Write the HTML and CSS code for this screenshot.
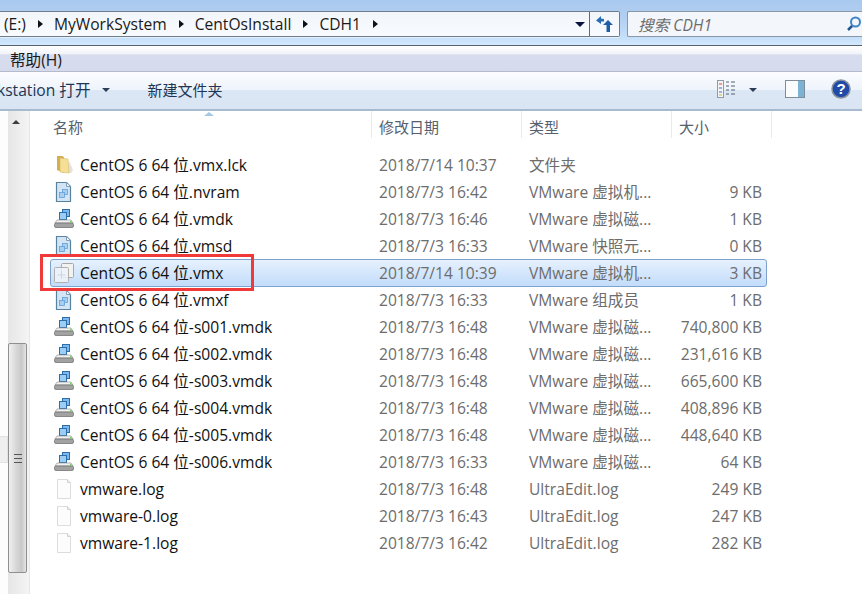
FILE: index.html
```html
<!DOCTYPE html>
<html lang="zh-CN">
<head>
    <meta charset="UTF-8">
    <title>CDH1</title>
    <link rel="stylesheet" href="styles.css">
</head>
<body>

<svg class="defs" width="0" height="0">
    <symbol id="ico-folder" viewBox="0 0 20 20">
        <path d="M15 6l4 9-2 3h-3z" fill="#e2e2e0"/>
        <path d="M3 1h5l2 1v16l-7-3z" fill="#d2ae4e"/>
        <path d="M6 3l8 1 1 14-9-1z" fill="#f5df95" stroke="#d8bb68" stroke-width=".6"/>
    </symbol>
    <symbol id="ico-doc" viewBox="0 0 20 20">
        <path d="M2.500 .5h10l4 4v15h-14z" fill="#d3e5f4" stroke="#58839f" stroke-width="1.200"/>
        <path d="M12.500 .5v4h4z" fill="#f4f8fb" stroke="#7f9db8"/>
        <rect x="8.500" y="7.500" width="5" height="5" fill="#a9cff0" stroke="#62a0da" stroke-width=".8"/>
        <rect x="5.500" y="10.500" width="5" height="5" fill="#a9cff0" stroke="#62a0da" stroke-width=".8"/>
    </symbol>
    <symbol id="ico-disk" viewBox="0 0 20 20">
        <rect x="8.500" y=".5" width="7" height="7" fill="#7ab8ef" stroke="#2b6ea8"/>
        <rect x="5.500" y="3.500" width="7" height="7" fill="#9ccdf5" stroke="#2b6ea8"/>
        <path d="M3 11h14l2 3H1z" fill="#f2f2f2" stroke="#9a9a9a" stroke-width=".7"/>
        <rect x=".5" y="14" width="19" height="4.500" rx="1.500" fill="#a2a2a2" stroke="#6a6a6a" stroke-width=".7"/>
        <rect x="16" y="12" width="1.500" height="1.500" fill="#66d44a"/>
    </symbol>
    <symbol id="ico-vmx" viewBox="0 0 20 20">
        <rect x="7.500" y=".5" width="12" height="14" rx="1" fill="#f2f2f0" stroke="#a8a8a8"/>
        <rect x=".5" y="4.500" width="14" height="15" rx="1" fill="#eef3fa" fill-opacity=".85" stroke="#b0b0b0"/>
        <path d="M7.500 8v8M3.500 12h8" stroke="#ccd5e0"/>
    </symbol>
    <symbol id="ico-log" viewBox="0 0 20 20">
        <path d="M3.500 .5h10l3 3v16h-13z" fill="#fcfcfc" stroke="#dcdcdc"/>
        <path d="M13.500 .5v3h3" fill="#f0f0f0" stroke="#d0d0d0"/>
    </symbol>
</svg>

<div class="window">
    <div class="nav-band">
        <div class="address">
            <div class="crumbs">
                <span>(E:)</span><i class="tri"></i>
                <span>MyWorkSystem</span><i class="tri"></i>
                <span>CentOsInstall</span><i class="tri"></i>
                <span>CDH1</span><i class="tri"></i>
            </div>
            <i class="tri-down"></i>
            <div class="refresh">
                <svg width="18" height="16" viewBox="0 0 18 16">
                    <path d="M5 0L0 4.500 5 8V5.500h3V3L5 2.500z" fill="#2a6db5"/>
                    <path d="M12 4l5 5h-3v7h-3.500V9H7z" fill="#1f5fa8"/>
                </svg>
            </div>
        </div>
        <div class="search">
            <span>搜索 CDH1</span>
            <svg width="16" height="18" viewBox="0 0 16 18">
                <circle cx="9.500" cy="7" r="4.500" fill="none" stroke="#3f85c6" stroke-width="2"/>
                <path d="M6 11l-4 4" stroke="#25558f" stroke-width="2.500"/>
            </svg>
        </div>
    </div>

    <div class="menubar"><span>帮助(H)</span></div>

    <div class="toolbar">
        <span class="open-btn">kstation 打开</span>
        <i class="tri-down small"></i>
        <span class="new-btn">新建文件夹</span>
        <div class="tool-right">
            <svg class="view-ico" width="20" height="18" viewBox="0 0 20 18">
                <rect x=".5" y=".5" width="6" height="17" fill="#f4f4f4" stroke="#8f9aa6"/>
                <path d="M2 4h3" stroke="#d84040"/>
                <path d="M2 8h3" stroke="#4070d0"/>
                <path d="M2 12h3" stroke="#4070d0"/>
                <path d="M2 15h3" stroke="#b8c030"/>
                <path d="M9 2h3m2 0h4M9 6h3m2 0h4M9 10h3m2 0h4M9 14h3m2 0h4" stroke="#55606c"/>
            </svg>
            <i class="tri-down small"></i>
            <svg class="pane-ico" width="20" height="18" viewBox="0 0 20 18">
                <rect x=".5" y=".5" width="19" height="17" fill="#fafbfc" stroke="#7f8c99"/>
                <rect x="13" y="1" width="6" height="16" fill="#7cb2d2"/>
            </svg>
            <svg class="help-ico" width="20" height="20" viewBox="0 0 20 20">
                <circle cx="10" cy="10" r="9" fill="#1f4aa8" stroke="#8a929e" stroke-width="1.500"/>
                <text x="10" y="15" text-anchor="middle" class="help-mark">?</text>
            </svg>
        </div>
    </div>

    <div class="main">
        <aside class="side">
            <div class="side-strip"><div class="side-sel"></div></div>
            <div class="scrollbar">
                <i class="tri-up"></i>
                <div class="thumb"><span class="grip"></span></div>
            </div>
        </aside>

        <section class="files">
            <div class="head">
                <i class="sort-mark"></i>
                <div class="hcell name">名称</div>
                <div class="hcell date">修改日期</div>
                <div class="hcell type">类型</div>
                <div class="hcell size">大小</div>
            </div>

            <div class="rows">
                <div class="row"><svg class="ico"><use href="#ico-folder"/></svg><span class="fname">CentOS 6 64 位.vmx.lck</span><span>2018/7/14 10:37</span><span>文件夹</span><span class="num"></span></div>
                <div class="row"><svg class="ico"><use href="#ico-doc"/></svg><span class="fname">CentOS 6 64 位.nvram</span><span>2018/7/3 16:42</span><span>VMware 虚拟机...</span><span class="num">9 KB</span></div>
                <div class="row"><svg class="ico"><use href="#ico-disk"/></svg><span class="fname">CentOS 6 64 位.vmdk</span><span>2018/7/3 16:46</span><span>VMware 虚拟磁...</span><span class="num">1 KB</span></div>
                <div class="row"><svg class="ico"><use href="#ico-doc"/></svg><span class="fname">CentOS 6 64 位.vmsd</span><span>2018/7/3 16:33</span><span>VMware 快照元...</span><span class="num">0 KB</span></div>
                <div class="row selected"><svg class="ico"><use href="#ico-vmx"/></svg><span class="fname">CentOS 6 64 位.vmx</span><span>2018/7/14 10:39</span><span>VMware 虚拟机...</span><span class="num">3 KB</span></div>
                <div class="row"><svg class="ico"><use href="#ico-doc"/></svg><span class="fname">CentOS 6 64 位.vmxf</span><span>2018/7/3 16:33</span><span>VMware 组成员</span><span class="num">1 KB</span></div>
                <div class="row"><svg class="ico"><use href="#ico-disk"/></svg><span class="fname">CentOS 6 64 位-s001.vmdk</span><span>2018/7/3 16:48</span><span>VMware 虚拟磁...</span><span class="num">740,800 KB</span></div>
                <div class="row"><svg class="ico"><use href="#ico-disk"/></svg><span class="fname">CentOS 6 64 位-s002.vmdk</span><span>2018/7/3 16:48</span><span>VMware 虚拟磁...</span><span class="num">231,616 KB</span></div>
                <div class="row"><svg class="ico"><use href="#ico-disk"/></svg><span class="fname">CentOS 6 64 位-s003.vmdk</span><span>2018/7/3 16:48</span><span>VMware 虚拟磁...</span><span class="num">665,600 KB</span></div>
                <div class="row"><svg class="ico"><use href="#ico-disk"/></svg><span class="fname">CentOS 6 64 位-s004.vmdk</span><span>2018/7/3 16:48</span><span>VMware 虚拟磁...</span><span class="num">408,896 KB</span></div>
                <div class="row"><svg class="ico"><use href="#ico-disk"/></svg><span class="fname">CentOS 6 64 位-s005.vmdk</span><span>2018/7/3 16:48</span><span>VMware 虚拟磁...</span><span class="num">448,640 KB</span></div>
                <div class="row"><svg class="ico"><use href="#ico-disk"/></svg><span class="fname">CentOS 6 64 位-s006.vmdk</span><span>2018/7/3 16:33</span><span>VMware 虚拟磁...</span><span class="num">64 KB</span></div>
                <div class="row"><svg class="ico"><use href="#ico-log"/></svg><span class="fname">vmware.log</span><span>2018/7/3 16:48</span><span>UltraEdit.log</span><span class="num">249 KB</span></div>
                <div class="row"><svg class="ico"><use href="#ico-log"/></svg><span class="fname">vmware-0.log</span><span>2018/7/3 16:43</span><span>UltraEdit.log</span><span class="num">247 KB</span></div>
                <div class="row"><svg class="ico"><use href="#ico-log"/></svg><span class="fname">vmware-1.log</span><span>2018/7/3 16:42</span><span>UltraEdit.log</span><span class="num">282 KB</span></div>
            </div>

            <div class="red-box"></div>
        </section>
    </div>
</div>

</body>
</html>
```

FILE: styles.css
```css
* {
    box-sizing: border-box;
}

html, body {
    margin: 0;
    height: 100%;
    overflow: hidden;
}

body {
    font-family: "Open Sans", "Noto Sans CJK SC", sans-serif;
    font-size: 15.6px;
    color: #1a1a1a;
    background: #fff;
}

.defs {
    position: absolute;
}

.window {
    display: flex;
    flex-direction: column;
    width: 862px;
    height: 594px;
}

/* top glass band with address and search */
.nav-band {
    display: flex;
    gap: 7px;
    height: 46px;
    padding: 11px 0 8px;
    background: linear-gradient(#a9c9ee, #b2cff2 40%, #c6e0fa 85%, #d2e8fc);
    border-bottom: 1px solid #5a6470;
}

.address {
    display: flex;
    align-items: center;
    width: 620px;
    background: linear-gradient(#f2f6fb, #f8fbfe);
    border: 1px solid #6f7c8c;
    border-left: none;
    border-radius: 0 2px 2px 0;
    box-shadow: 0 1px 0 #e6f0fb;
}

.crumbs {
    display: flex;
    align-items: center;
    flex: 1;
    padding-left: 4px;
}

.crumbs span {
    position: relative;
    top: 0;
}

.tri {
    width: 0;
    height: 0;
    margin: 0 11px 0 12px;
    border-left: 5px solid #111;
    border-top: 4px solid transparent;
    border-bottom: 4px solid transparent;
}

.tri-down {
    width: 0;
    height: 0;
    margin-right: 4px;
    border-top: 5px solid #0a1240;
    border-left: 5px solid transparent;
    border-right: 5px solid transparent;
}

.tri-down.small {
    border-top-color: #2c3d58;
    border-top-width: 4px;
    border-left-width: 4px;
    border-right-width: 4px;
}

.refresh {
    display: flex;
    align-items: center;
    justify-content: center;
    width: 30px;
    height: 100%;
    border-left: 1px solid #5f6b78;
}

.search {
    display: flex;
    align-items: center;
    justify-content: space-between;
    flex: 1;
    padding: 0 0 0 10px;
    background: #f3f7fc;
    border: 1px solid #8b97a5;
    border-right: none;
    border-radius: 2px 0 0 2px;
    font-style: italic;
    color: #6d6d6d;
}

.menubar {
    height: 26px;
    padding: 5px 0 0 10px;
    background: linear-gradient(#fff, #f3f4fa 30%, #d7dcee 36%, #d5daec);
    border-bottom: 1px solid #b4bccb;
    line-height: 18px;
}

.toolbar {
    display: flex;
    align-items: center;
    height: 39px;
    padding-bottom: 3px;
    background: linear-gradient(#fbfdff, #eef4fb 48%, #dce7f5 50%, #dae5f3);
    border-bottom: 2px solid #a6bad0;
    color: #1e3553;
}

.open-btn {
    margin-left: -3px;
}

.toolbar .tri-down.small {
    margin: 2px 0 0 11px;
}

.new-btn {
    margin-left: 38px;
    font-size: 15px;
}

.tool-right {
    display: flex;
    align-items: center;
    margin-left: auto;
    padding-right: 11px;
}

.view-ico {
    margin-right: 12px;
}

.toolbar .tool-right .tri-down.small {
    margin: 2px 0 0 0;
}

.pane-ico {
    margin-left: 28px;
}

.help-ico {
    margin-left: 26px;
}

.help-mark {
    font-family: "Liberation Sans", sans-serif;
    font-size: 15px;
    font-weight: 700;
    fill: #fff;
}

.main {
    display: flex;
    flex: 1;
    min-height: 0;
}

/* navigation strip and its scrollbar */
.side {
    display: flex;
    width: 30px;
    border-right: 1px solid #dfe9f1;
}

.side-strip {
    width: 8px;
    padding-top: 325px;
    background: #fdfdfd;
}

.side-sel {
    height: 27px;
    background: #efefef;
    border: 1px solid #e2e2e2;
    border-left: none;
}

.scrollbar {
    position: relative;
    flex: 1;
    padding: 232px 2px 22px 0;
    background: linear-gradient(90deg, #e6e6e6, #f4f4f4);
}

.tri-up {
    position: absolute;
    left: 4px;
    top: 9px;
    border-bottom: 4px solid #3c3c3c;
    border-left: 4px solid transparent;
    border-right: 4px solid transparent;
}

.thumb {
    display: flex;
    align-items: center;
    justify-content: center;
    height: 230px;
    background: linear-gradient(90deg, #f0f0f0, #d6d6d6 45%, #c8c8c8 75%, #e6e6e6);
    border: 1px solid #8f8f8f;
    border-radius: 2px;
}

.grip {
    width: 8px;
    height: 9px;
    border-top: 1px solid #555;
    border-bottom: 1px solid #555;
    background: linear-gradient(#555, #555) center / 100% 1px no-repeat;
}

/* file list */
.files {
    position: relative;
    flex: 1;
    min-width: 0;
}

.head {
    position: relative;
    display: flex;
    height: 40px;
    font-size: 15px;
    color: #55606e;
}

.hcell {
    height: 27px;
    padding-top: 6px;
    border-right: 1px solid #e4ebf2;
    line-height: 20px;
}

.hcell.name {
    width: 342px;
    padding-left: 23px;
}

.hcell.date,
.hcell.type {
    width: 150px;
    padding-left: 7px;
}

.hcell.size {
    width: 100px;
    padding-left: 7px;
}

.sort-mark {
    position: absolute;
    left: 174px;
    top: 1px;
    border-bottom: 4px solid #a4c8e4;
    border-left: 5px solid transparent;
    border-right: 5px solid transparent;
}

.rows {
    display: flex;
    flex-direction: column;
    width: 717px;
    margin-left: 20px;
}

.row {
    display: grid;
    grid-template-columns: 20px 304px 150px 130px 1fr;
    align-items: center;
    height: 27px;
    padding: 0 4px 0 4px;
    border: 1px solid transparent;
    color: #6d6d6d;
    line-height: 20px;
    white-space: nowrap;
}

.row.selected {
    height: 28px;
    margin-bottom: -1px;
    background: linear-gradient(#e6f1fd, #c2dcfb);
    border-color: #7da2ce;
    border-radius: 3px;
}

.ico {
    width: 20px;
    height: 20px;
    margin-left: -1px;
}

.fname {
    padding-left: 5px;
    color: #111;
}

.num {
    text-align: right;
}

.red-box {
    position: absolute;
    left: 10px;
    top: 143px;
    width: 214px;
    height: 37px;
    border: 3px solid #f03a3a;
}
```
